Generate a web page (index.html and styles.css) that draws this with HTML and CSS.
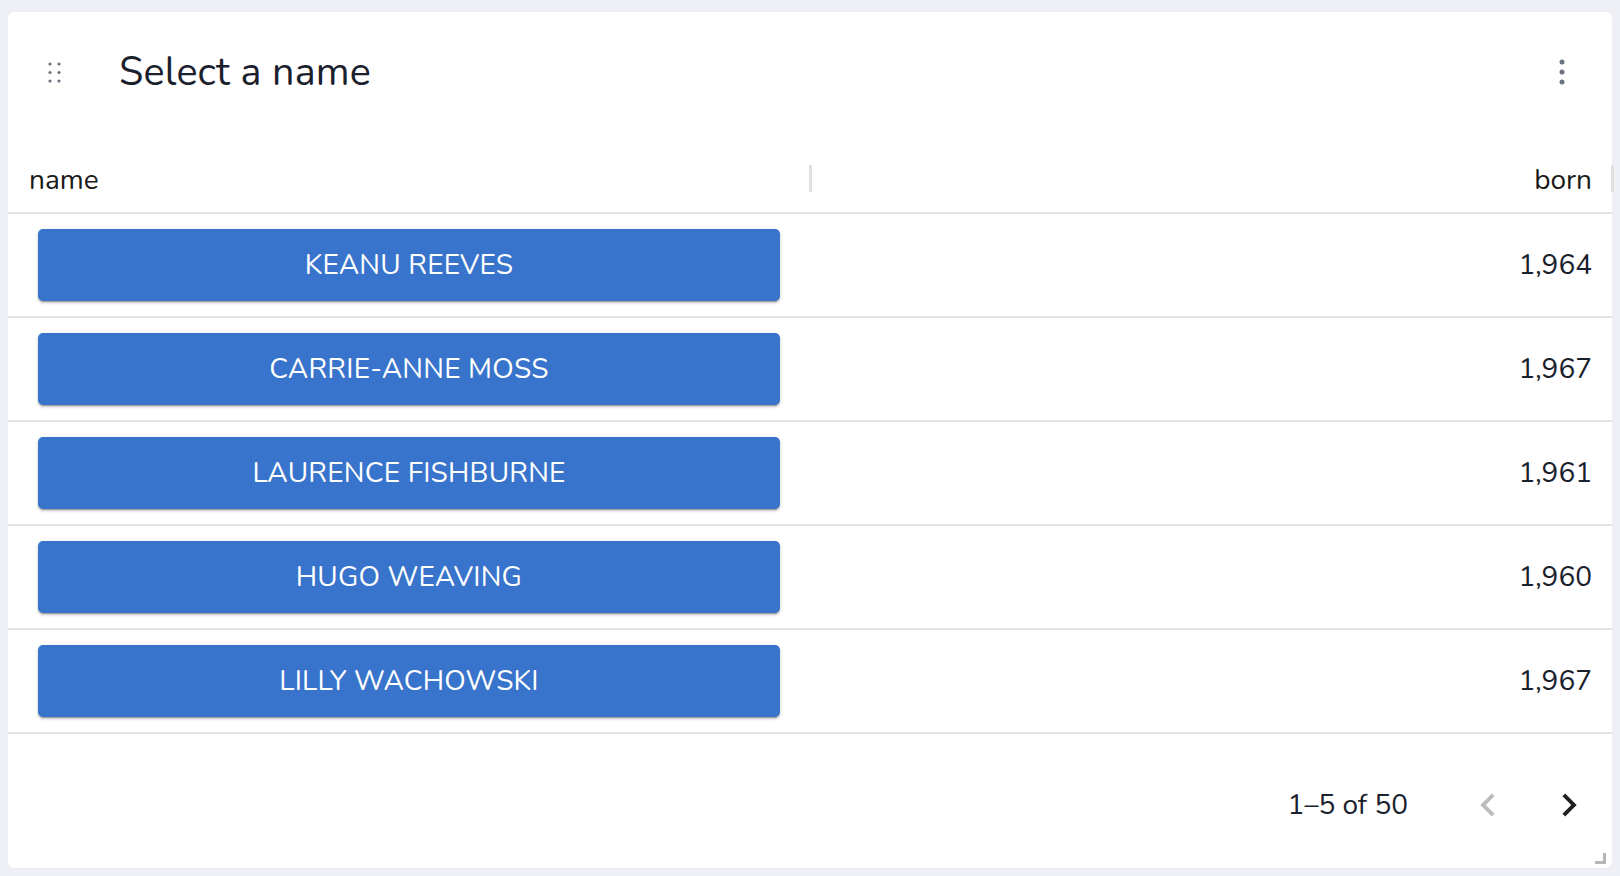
FILE: index.html
```html
<!DOCTYPE html>
<html>
<head>
<meta charset="utf-8">
<link rel="stylesheet" href="styles.css">
</head>
<body>
<div class="page">
  <div class="card">
    <div class="card-header">
      <div class="drag">
        <svg width="16" height="24" viewBox="0 0 16 24"><g fill="#6b7280"><circle cx="3" cy="4" r="1.6"/><circle cx="12" cy="4" r="1.6"/><circle cx="3" cy="12.5" r="1.6"/><circle cx="12" cy="12.5" r="1.6"/><circle cx="3" cy="21" r="1.6"/><circle cx="12" cy="21" r="1.6"/></g></svg>
      </div>
      <div class="title">Select a name</div>
      <div class="kebab">
        <svg width="8" height="28" viewBox="0 0 8 28"><g fill="#6b7280"><circle cx="4" cy="4" r="2.5"/><circle cx="4" cy="14" r="2.5"/><circle cx="4" cy="24" r="2.5"/></g></svg>
      </div>
    </div>
    <div class="grid">
      <div class="grid-head">
        <div class="hcell hcell-name">name<span class="sep"></span></div>
        <div class="hcell hcell-born">born<span class="sep sep-end"></span></div>
      </div>
      <div class="row"><div class="cell-name"><button class="btn">Keanu Reeves</button></div><div class="cell-born">1,964</div></div>
      <div class="row"><div class="cell-name"><button class="btn">Carrie-Anne Moss</button></div><div class="cell-born">1,967</div></div>
      <div class="row"><div class="cell-name"><button class="btn">Laurence Fishburne</button></div><div class="cell-born">1,961</div></div>
      <div class="row"><div class="cell-name"><button class="btn">Hugo Weaving</button></div><div class="cell-born">1,960</div></div>
      <div class="row"><div class="cell-name"><button class="btn">Lilly Wachowski</button></div><div class="cell-born">1,967</div></div>
    </div>
    <div class="footer">
      <span class="count">1–5 of 50</span>
      <span class="pbtn pbtn-prev"><svg width="46" height="46" viewBox="0 0 24 24"><path fill="#bdbdbd" d="M15.41 7.41 14 6l-6 6 6 6 1.41-1.41L10.83 12z"/></svg></span>
      <span class="pbtn pbtn-next"><svg width="46" height="46" viewBox="0 0 24 24"><path fill="#1f1f1f" d="M10 6 8.59 7.41 13.17 12l-4.58 4.59L10 18l6-6z"/></svg></span>
    </div>
    <span class="resize"></span>
  </div>
</div>
</body>
</html>
```

FILE: styles.css
```css
html, body {
  margin: 0;
  padding: 0;
}
body {
  background: #eef0f5;
  font-family: "Nunito", Lato, "Noto Sans", sans-serif;
  color: #1a202c;
}
.page {
  padding: 12px 8px 8px 8px;
  height: 876px;
  box-sizing: border-box;
}
.card {
  position: relative;
  background: #fff;
  border-radius: 6px;
  height: 856px;
  display: flex;
  flex-direction: column;
  box-shadow: 0 1px 2px rgba(0,0,0,0.04);
}
.card-header {
  height: 136px;
  display: flex;
  align-items: center;
  padding: 0 46px 0 39px;
  box-sizing: border-box;
}
.drag {
  width: 16px;
  height: 24px;
  display: flex;
  margin-top: -17px;
}
.title {
  margin-left: 56px;
  font-size: 39.5px;
  flex: 1;
  margin-top: -17px;
  letter-spacing: 0.2px;
}
.kebab {
  width: 8px;
  height: 28px;
  display: flex;
  margin-top: -16px;
}
.grid {
  display: flex;
  flex-direction: column;
}
.grid-head {
  display: flex;
  height: 64px;
  border-bottom: 2px solid #e2e2e2;
  font-size: 28px;
  color: #1a1a1a;
}
.hcell {
  position: relative;
  display: flex;
  align-items: center;
  box-sizing: border-box;
}
.hcell-name {
  width: 802px;
  padding-left: 21px;
}
.hcell-born {
  flex: 1;
  justify-content: flex-end;
  padding-right: 20px;
}
.sep {
  position: absolute;
  right: -2px;
  top: 17px;
  width: 3px;
  height: 27px;
  background: #e0e0e0;
}
.sep-end {
  right: -2px;
}
.row {
  display: flex;
  height: 102px;
  border-bottom: 2px solid #e2e2e2;
  align-items: center;
}
.cell-name {
  width: 802px;
  padding-left: 30px;
  box-sizing: border-box;
}
.btn {
  width: 742px;
  height: 72px;
  border: none;
  border-radius: 5px;
  background: #3874cb;
  color: #fff;
  font-family: inherit;
  font-size: 28px;
  text-transform: uppercase;
  letter-spacing: 0.2px;
  box-shadow: 0 3px 1px -2px rgba(0,0,0,0.22), 0 2px 2px 0 rgba(0,0,0,0.16), 0 1px 5px 0 rgba(0,0,0,0.12);
  display: flex;
  align-items: center;
  justify-content: center;
  padding: 0;
}
.cell-born {
  flex: 1;
  text-align: right;
  padding-right: 20px;
  font-size: 28px;
  color: #1a202c;
}
.footer {
  flex: 1;
  display: flex;
  align-items: center;
  justify-content: flex-end;
  padding-right: 20px;
  padding-top: 8px;
  font-size: 28px;
}
.count {
  margin-right: 57px;
}
.pbtn {
  width: 46px;
  height: 46px;
  display: flex;
}
.pbtn-prev {
  margin-right: 35px;
}
.resize {
  position: absolute;
  right: 6px;
  bottom: 4px;
  width: 8px;
  height: 8px;
  border-right: 3px solid #b5b5b5;
  border-bottom: 3px solid #b5b5b5;
}
```
